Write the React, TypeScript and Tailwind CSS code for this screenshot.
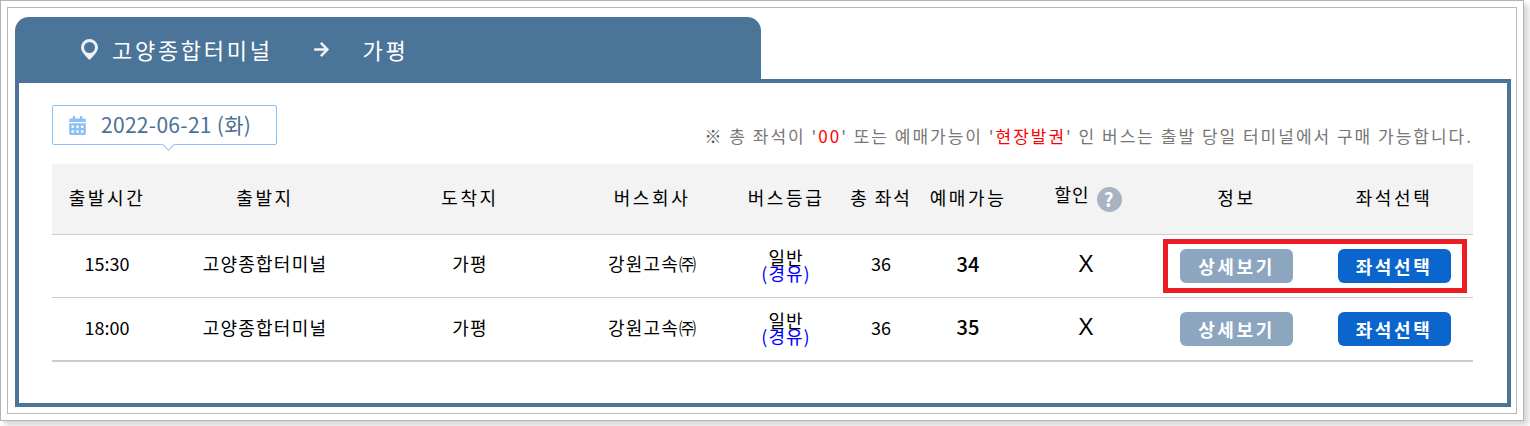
import { FaArrowRight, FaCalendarAlt } from 'react-icons/fa'

const font = { fontFamily: '"Noto Sans CJK KR", sans-serif' }

const columns = 'grid grid-cols-[110px_206px_204px_160px_108px_82px_92px_144px_157px_158px]'

const rows = [
  { time: '15:30', seats: '34' },
  { time: '18:00', seats: '35' },
]

function Pin() {
  return (
    <svg width="17" height="21" viewBox="0 0 17 21" className="shrink-0">
      <path
        fillRule="evenodd"
        fill="#eef2f6"
        d="M8.500 0a8.500 8.500 0 0 1 8.500 8.500c0 4-4.500 8.500-8.500 12.500C4.500 17 0 12.500 0 8.500A8.500 8.500 0 0 1 8.500 0zm0 3a5.500 5.500 0 1 0 0 11 5.500 5.500 0 0 0 0-11z"
      />
    </svg>
  )
}

function HeaderRow() {
  return (
    <div className={`${columns} h-[71px] items-center border-b border-[#cccccc] bg-[#f3f3f3] pb-[3px] text-center text-[18px] tracking-[2.600px] text-black`}>
      <div>출발시간</div>
      <div>출발지</div>
      <div>도착지</div>
      <div>버스회사</div>
      <div>버스등급</div>
      <div className="tracking-[2px]">총 좌석</div>
      <div>예매가능</div>
      <div className="flex items-center justify-center gap-[7px] pl-[4px] tracking-[1px]">
        <span className="-mt-[6px]">할인</span>
        <span className="mt-[3px] flex h-[25px] w-[25px] items-center justify-center rounded-full bg-[#a9b3c1] text-[19px] font-bold text-white">?</span>
      </div>
      <div>정보</div>
      <div>좌석선택</div>
    </div>
  )
}

function BusRow({ time, seats, last }: { time: string; seats: string; last: boolean }) {
  const pad = last ? 'pb-[4px]' : 'pb-[5px]'

  return (
    <div className={`${columns} items-center text-center text-[18px] text-black ${last ? 'h-[64px] border-b-2 border-[#cccccc]' : 'h-[63px] border-b border-[#cccccc]'}`}>
      <div className={pad}>{time}</div>
      <div className={`${pad} tracking-[1.200px]`}>고양종합터미널</div>
      <div className={`${pad} tracking-[1.200px]`}>가평</div>
      <div className={`${pad} tracking-[1.200px]`}>
        강원고속<span className="text-[17px] tracking-normal">㈜</span>
      </div>
      <div className="flex flex-col items-center pb-[3px] leading-[16px] tracking-[1px]">
        <span>일반</span>
        <span className="text-[#0000ff]">(경유)</span>
      </div>
      <div className={pad}>36</div>
      <div className={`${pad} text-[20px] font-medium`}>{seats}</div>
      <div className="pb-[4px] text-[23px]" style={{ fontFamily: '"Liberation Sans", sans-serif' }}>X</div>
      <div className="flex justify-center">
        <button type="button" className="h-[34px] w-[113px] rounded-[6px] bg-[#8ca6bf] text-[18px] font-bold tracking-[2.600px] text-white">
          상세보기
        </button>
      </div>
      <div className="flex justify-center">
        <button type="button" className="h-[34px] w-[113px] rounded-[6px] bg-[#0a66cc] text-[18px] font-bold tracking-[2.600px] text-white">
          좌석선택
        </button>
      </div>
    </div>
  )
}

export default function App() {
  return (
    <div className="h-[426px] w-[1530px] bg-white" style={font}>
      <div className="relative h-[421px] w-[1524px] border border-[#b4b4b4] bg-white p-[6px] shadow-[4px_4px_6px_rgba(0,0,0,0.18)]">
        <div className="h-full w-full border border-[#b9b9b9] px-[7px] pt-[9px]">
          <div className="flex h-[66px] w-[746px] items-center rounded-t-[14px] bg-[#4b7499] pb-[2px] pl-[66px] text-[22px] tracking-[2.700px] text-white">
            <Pin />
            <span className="ml-[14px]">고양종합터미널</span>
            <FaArrowRight className="ml-[40px] text-[17px] text-[#eef2f6]" />
            <span className="ml-[33px]">가평</span>
          </div>
          <div className="-mt-[4px] h-[328px] w-[1496px] border-4 border-[#4b7499] bg-white pl-[33px] pr-[34px] pt-[22px]">
            <div className="flex h-[59px] items-start justify-between">
              <div className="relative flex h-[40px] w-[225px] items-center rounded-[2px] border border-[#8cc1f5] pl-[15px] text-[21px] tracking-[0.300px] text-[#4b6f93]">
                <FaCalendarAlt className="text-[19px] text-[#8cc1f5]" />
                <span className="ml-[14px]">2022-06-21 (화)</span>
                <span className="absolute -bottom-[5px] left-[111px] h-[9px] w-[9px] rotate-45 border-r border-b border-[#8cc1f5] bg-white" />
              </div>
              <p className="mt-[18px] text-[17px] tracking-[2px] text-[#777777]">
                <span className="font-bold text-[#555555]">※</span> 총 좌석이 '<span className="text-[#ff0000]">00</span>' 또는 예매가능이 '
                <span className="text-[#ff0000]">현장발권</span>' 인 버스는 출발 당일 터미널에서 구매 가능합니다.
              </p>
            </div>
            <HeaderRow />
            {rows.map((row, i) => (
              <BusRow key={row.time} time={row.time} seats={row.seats} last={i === rows.length - 1} />
            ))}
          </div>
        </div>
        <div className="absolute left-[1162px] top-[238px] h-[54px] w-[304px] border-[5px] border-[#ee1c25]" />
      </div>
    </div>
  )
}
